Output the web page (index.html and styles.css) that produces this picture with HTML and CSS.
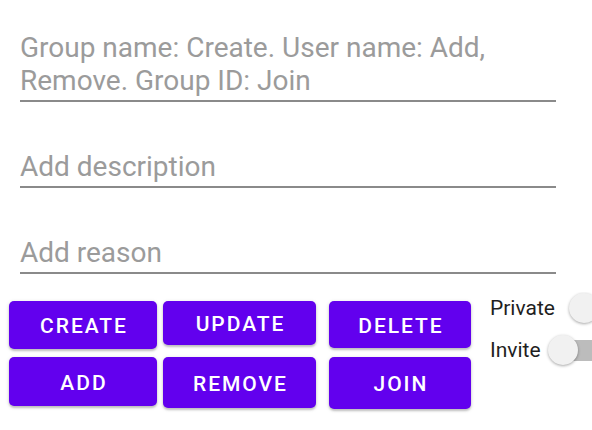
FILE: index.html
```html
<!DOCTYPE html>
<html lang="en">
<head>
<meta charset="utf-8">
<title>Groups</title>
<link rel="stylesheet" href="styles.css">
</head>
<body>
<main class="screen">
  <section class="fields">
    <div class="field">Group name: Create. User name: Add, Remove. Group ID: Join</div>
    <div class="field">Add description</div>
    <div class="field">Add reason</div>
  </section>
  <section class="actions">
    <div class="col col-1">
      <button class="btn btn-create">CREATE</button>
      <button class="btn btn-add">ADD</button>
    </div>
    <div class="col col-2">
      <button class="btn btn-update">UPDATE</button>
      <button class="btn btn-remove">REMOVE</button>
    </div>
    <div class="col col-3">
      <button class="btn btn-delete">DELETE</button>
      <button class="btn btn-join">JOIN</button>
    </div>
    <div class="toggles">
      <label class="toggle">
        <span class="toggle-label">Private</span>
        <span class="switch switch-private"><span class="track"></span><span class="thumb"></span></span>
      </label>
      <label class="toggle">
        <span class="toggle-label">Invite</span>
        <span class="switch switch-invite"><span class="track"></span><span class="thumb"></span></span>
      </label>
    </div>
  </section>
</main>
</body>
</html>
```
FILE: styles.css
```css
html, body {
  margin: 0;
  padding: 0;
}
body {
  width: 592px;
  height: 430px;
  overflow: hidden;
  background: #ffffff;
  font-family: Roboto, "Noto Sans", sans-serif;
}
.screen {
  width: 592px;
  overflow: hidden;
}
.fields {
  padding: 31px 36px 0 20px;
}
.field {
  font-size: 28px;
  line-height: 33px;
  color: #9b9b9b;
  padding-bottom: 3px;
  border-bottom: 2px solid #8a8a8a;
}
.field + .field {
  margin-top: 48px;
}
.actions {
  display: flex;
  align-items: flex-start;
  flex-wrap: nowrap;
  margin-top: 18px;
  padding-left: 9px;
  overflow: hidden;
  height: 138px;
}
.col {
  display: flex;
  flex-direction: column;
  flex-shrink: 0;
  margin-top: 9px;
}
.col-1 { width: 148px; gap: 8px; }
.col-2 { width: 153px; gap: 12px; margin-left: 6px; }
.col-3 { width: 142px; gap: 9px; margin-left: 13px; }
.btn {
  display: flex;
  align-items: center;
  justify-content: center;
  border: 0;
  border-radius: 5px;
  background: #6200ee;
  color: #ffffff;
  font-family: Roboto, "Noto Sans", sans-serif;
  font-weight: 500;
  font-size: 21px;
  line-height: 1;
  letter-spacing: 1.95px;
  padding: 3px 0 0 1.95px;
  box-shadow: 0 2px 2px rgba(0, 0, 0, 0.18), 0 1px 4px rgba(0, 0, 0, 0.14);
}
.btn-create { height: 48px; }
.btn-add { height: 49px; }
.btn-update { height: 44px; }
.btn-remove { height: 51px; }
.btn-delete { height: 47px; }
.btn-join { height: 52px; }
.toggles {
  display: flex;
  flex-direction: column;
  gap: 11px;
  flex-shrink: 0;
  margin-left: 19px;
}
.toggle {
  display: flex;
  align-items: center;
  height: 31px;
  font-size: 21px;
  color: #1f1f1f;
}
.switch {
  position: relative;
  width: 56px;
  height: 30px;
  flex-shrink: 0;
}
.switch-private { margin-left: 14px; }
.switch-invite { margin-left: 7px; }
.track {
  position: absolute;
  left: 4px;
  top: 5px;
  width: 50px;
  height: 21px;
  border-radius: 10.5px;
  background: #bcbcbc;
}
.thumb {
  position: absolute;
  left: 0;
  top: 0;
  width: 30px;
  height: 30px;
  border-radius: 50%;
  background: #f1f1f1;
  box-shadow: 0 1px 3px rgba(0, 0, 0, 0.35);
}
```
